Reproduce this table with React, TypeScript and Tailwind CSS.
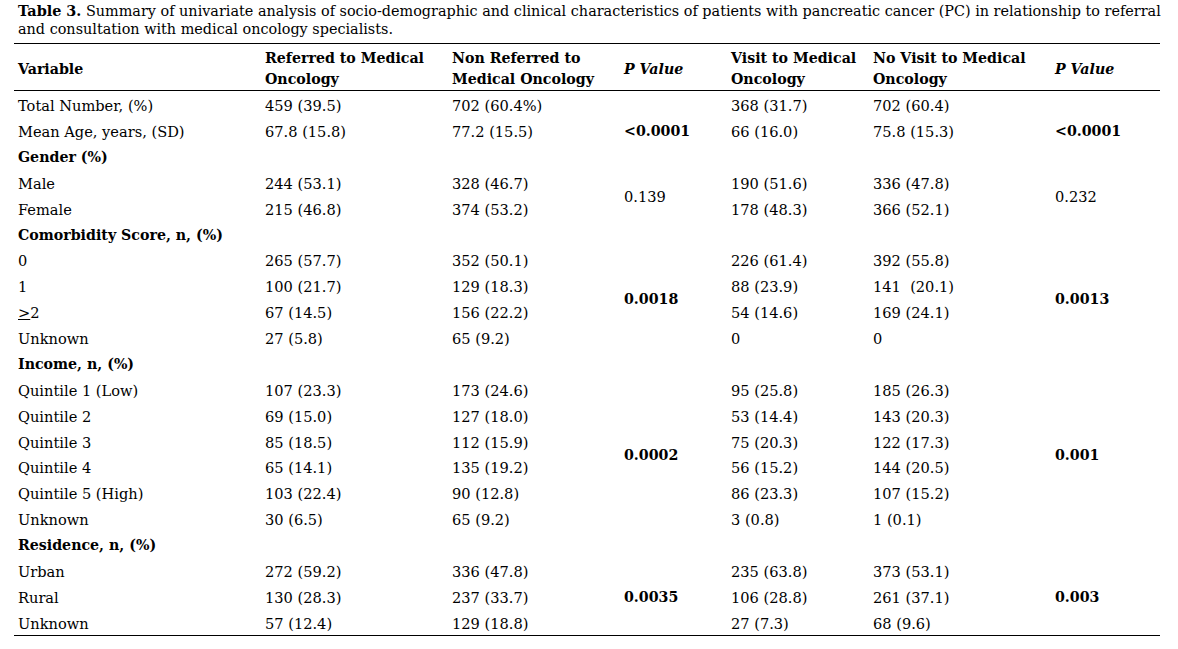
const rows: { v: string; a?: string; b?: string; c?: string; d?: string; bold?: boolean; p1?: { t: string; span: number; bold?: boolean }; p2?: { t: string; span: number; bold?: boolean } }[] = [
  { v: 'Total Number, (%)', a: '459 (39.5)', b: '702 (60.4%)', c: '368 (31.7)', d: '702 (60.4)', p1: { t: '', span: 1 }, p2: { t: '', span: 1 } },
  { v: 'Mean Age, years, (SD)', a: '67.8 (15.8)', b: '77.2 (15.5)', c: '66 (16.0)', d: '75.8 (15.3)', p1: { t: '<0.0001', span: 1, bold: true }, p2: { t: '<0.0001', span: 1, bold: true } },
  { v: 'Gender (%)', bold: true, p1: { t: '', span: 1 }, p2: { t: '', span: 1 } },
  { v: 'Male', a: '244 (53.1)', b: '328 (46.7)', c: '190 (51.6)', d: '336 (47.8)', p1: { t: '0.139', span: 2 }, p2: { t: '0.232', span: 2 } },
  { v: 'Female', a: '215 (46.8)', b: '374 (53.2)', c: '178 (48.3)', d: '366 (52.1)' },
  { v: 'Comorbidity Score, n, (%)', bold: true, p1: { t: '', span: 1 }, p2: { t: '', span: 1 } },
  { v: '0', a: '265 (57.7)', b: '352 (50.1)', c: '226 (61.4)', d: '392 (55.8)', p1: { t: '0.0018', span: 4, bold: true }, p2: { t: '0.0013', span: 4, bold: true } },
  { v: '1', a: '100 (21.7)', b: '129 (18.3)', c: '88 (23.9)', d: '141\u00a0 (20.1)' },
  { v: '>2', a: '67 (14.5)', b: '156 (22.2)', c: '54 (14.6)', d: '169 (24.1)' },
  { v: 'Unknown', a: '27 (5.8)', b: '65 (9.2)', c: '0', d: '0' },
  { v: 'Income, n, (%)', bold: true, p1: { t: '', span: 1 }, p2: { t: '', span: 1 } },
  { v: 'Quintile 1 (Low)', a: '107 (23.3)', b: '173 (24.6)', c: '95 (25.8)', d: '185 (26.3)', p1: { t: '0.0002', span: 6, bold: true }, p2: { t: '0.001', span: 6, bold: true } },
  { v: 'Quintile 2', a: '69 (15.0)', b: '127 (18.0)', c: '53 (14.4)', d: '143 (20.3)' },
  { v: 'Quintile 3', a: '85 (18.5)', b: '112 (15.9)', c: '75 (20.3)', d: '122 (17.3)' },
  { v: 'Quintile 4', a: '65 (14.1)', b: '135 (19.2)', c: '56 (15.2)', d: '144 (20.5)' },
  { v: 'Quintile 5 (High)', a: '103 (22.4)', b: '90 (12.8)', c: '86 (23.3)', d: '107 (15.2)' },
  { v: 'Unknown', a: '30 (6.5)', b: '65 (9.2)', c: '3 (0.8)', d: '1 (0.1)' },
  { v: 'Residence, n, (%)', bold: true, p1: { t: '', span: 1 }, p2: { t: '', span: 1 } },
  { v: 'Urban', a: '272 (59.2)', b: '336 (47.8)', c: '235 (63.8)', d: '373 (53.1)', p1: { t: '0.0035', span: 3, bold: true }, p2: { t: '0.003', span: 3, bold: true } },
  { v: 'Rural', a: '130 (28.3)', b: '237 (33.7)', c: '106 (28.8)', d: '261 (37.1)' },
  { v: 'Unknown', a: '57 (12.4)', b: '129 (18.8)', c: '27 (7.3)', d: '68 (9.6)' },
]

export default function App() {
  const cell = 'pl-[4px] pt-[4px] align-middle whitespace-nowrap'
  const bold = ' font-bold text-[14.2px]'

  return (
    <div className="min-h-screen bg-white text-black font-['DejaVu_Serif',serif] text-[14.6px]">
      {/* Caption */}
      <div className="pl-[18px] pt-[2px] leading-[18px] whitespace-nowrap text-[14.4px]">
        <b>Table 3.</b> Summary of univariate analysis of socio-demographic and clinical characteristics of patients with pancreatic cancer (PC) in relationship to referral
        <br />
        and consultation with medical oncology specialists.
      </div>

      <table className="ml-[14px] mt-[5px] w-[1146px] table-fixed border-collapse">
        <colgroup>
          <col className="w-[247px]" />
          <col className="w-[187px]" />
          <col className="w-[172px]" />
          <col className="w-[107px]" />
          <col className="w-[142px]" />
          <col className="w-[182px]" />
          <col className="w-[109px]" />
        </colgroup>
        <thead>
          <tr className="h-[47px] border-t-[1.5px] border-b-[1.5px] border-black text-left leading-[21px]">
            <th className={cell + bold}>Variable</th>
            <th className={cell + bold}>Referred to Medical<br />Oncology</th>
            <th className={cell + bold}>Non Referred to<br />Medical Oncology</th>
            <th className={cell + bold + ' italic'}>P Value</th>
            <th className={cell + bold}>Visit to Medical<br />Oncology</th>
            <th className={cell + bold}>No Visit to Medical<br />Oncology</th>
            <th className={cell + bold + ' italic'}>P Value</th>
          </tr>
        </thead>
        <tbody className="border-b-[1.5px] border-black">
          {rows.map((r, i) => (
            <tr key={i} className="h-[25.9px]">
              <td className={cell + (r.bold ? bold : '')}>
                {r.v === '>2' ? <><span className="underline">&gt;</span>2</> : r.v}
              </td>
              <td className={cell}>{r.a}</td>
              <td className={cell}>{r.b}</td>
              {r.p1 && <td rowSpan={r.p1.span} className={cell + (r.p1.bold ? bold : '')}>{r.p1.t}</td>}
              <td className={cell}>{r.c}</td>
              <td className={cell}>{r.d}</td>
              {r.p2 && <td rowSpan={r.p2.span} className={cell + (r.p2.bold ? bold : '')}>{r.p2.t}</td>}
            </tr>
          ))}
        </tbody>
      </table>
    </div>
  )
}
